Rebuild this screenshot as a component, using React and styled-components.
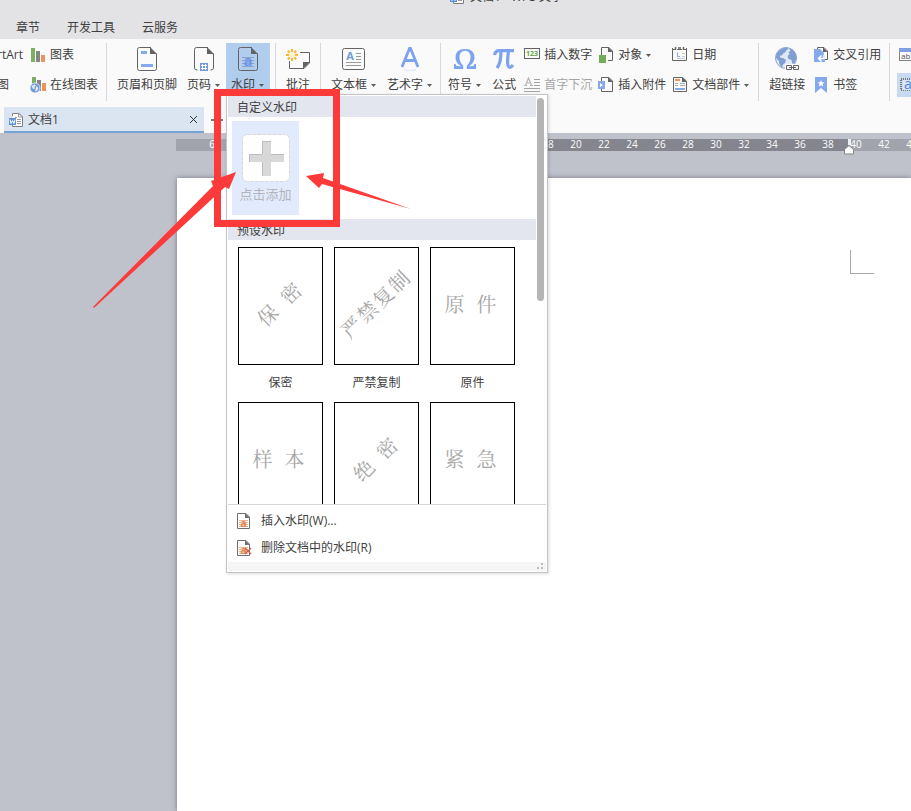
import React from 'react';
import styled, { createGlobalStyle, css } from 'styled-components';

const GREY = '#636363';
const BLUE = '#84a9ec';

const menus = ['章节', '开发工具', '云服务'];

const presets = [
  { name: '保密', rotated: true },
  { name: '严禁复制', rotated: true },
  { name: '原件' },
  { name: '样本' },
  { name: '绝密', rotated: true },
  { name: '紧急' }
];

const even = (from, to) => {
  const list = [];
  for (let i = from; i <= to; i += 2) list.push(i);
  return list;
};

/* big icons, 24 x 24 */

const HeaderFooterIcon = () => (
  <svg width="24" height="24" viewBox="0 0 24 24" fill="none">
    <path d="M16 .5H4.500Q2.500 .5 2.500 2.500V21.500Q2.500 23.500 4.500 23.500H19.500Q21.500 23.500 21.500 21.500V6.500" stroke={GREY} />
    <path d="M15 0v7h7z" fill={GREY} />
    <path d="M6 4h6v3H6zM6 17h12v3H6z" fill={BLUE} />
  </svg>
);

const PageNumberIcon = () => (
  <svg width="24" height="24" viewBox="0 0 24 24" fill="none">
    <path d="M16 .5H4.500Q2.500 .5 2.500 2.500V21Q2.500 23 5.500 23M21.500 6.500V21Q21.500 23 18.500 23" stroke={GREY} />
    <path d="M15 0v7h7z" fill={GREY} />
    <path d="M8 16h8v8H8z" fill="#7398de" />
    <path d="M10.500 17v6M13.500 17v6M9 18.500h6M9 21.500h6" stroke="#fff" />
  </svg>
);

const WatermarkIcon = () => (
  <svg width="24" height="24" viewBox="0 0 24 24" fill="none">
    <path d="M16 .5H4.500Q2.500 .5 2.500 2.500V21.500Q2.500 23.500 4.500 23.500H19.500Q21.500 23.500 21.500 21.500V6.500" stroke={GREY} />
    <path d="M15 0v7h7z" fill={GREY} />
    <path d="M6 10.500h12M6 13.500h12M6 16.500h12M6 19.500h12" stroke="#8ba0c4" />
    <text x="12" y="19" fill="#6b97ec" fontSize="15" fontWeight="700" textAnchor="middle">a</text>
  </svg>
);

const CommentIcon = () => (
  <svg width="24" height="24" viewBox="0 0 24 24" fill="none">
    <path d="M14 5.500h9.500V16L18 21.500H3.500V14" stroke={GREY} />
    <path d="M24 15h-7v7z" fill={GREY} />
    <circle cx="6" cy="8" r="2.500" fill="#fdf0c4" />
    <path d="M6 2v3M6 11v3M0 8h3M9 8h3M1.800 3.800l2 2M8.200 10.200l2 2M10.200 3.800l-2 2M3.800 10.200l-2 2" stroke="#f7b72c" strokeWidth="2" />
  </svg>
);

const TextBoxIcon = () => (
  <svg width="24" height="24" viewBox="0 0 24 24" fill="none">
    <rect x=".5" y="1.500" width="22" height="21" rx="2" stroke={GREY} />
    <text x="8" y="13" fill="#7398de" fontSize="11" fontWeight="700" textAnchor="middle">A</text>
    <path d="M14 6.500h5M14 9.500h5M14 12.500h5M4 15.500h15M4 18.500h15" stroke="#9b9b9b" />
  </svg>
);

const WordArtIcon = () => (
  <svg width="24" height="24" viewBox="0 0 24 24" fill="none">
    <path d="M4 20L11.500 1.500h1L20 20M7.200 13.500h9.600" stroke="#7ba3ee" strokeWidth="2.800" />
    <path d="M6 22.500q6 2 12 0" stroke="#e2eafb" strokeWidth="1.500" />
  </svg>
);

const OmegaIcon = () => (
  <svg width="24" height="24" viewBox="0 0 24 24">
    <path d="M1 22v-5h1.500q.4 2.300 2.600 2.300H8Q2.500 15.800 2.500 10.500 2.500 2 12 2t9.500 8.500Q21.500 15.800 16 19.300h2.900q2.200 0 2.600-2.300H23v5h-9.200v-3.200Q17.500 15 17.500 10.500 17.500 3.700 12 3.700T6.500 10.500Q6.500 15 10.200 18.800V22z" fill="#7ba3ee" />
  </svg>
);

const PiIcon = () => (
  <svg width="24" height="24" viewBox="0 0 24 24" fill="none" stroke="#7ba3ee">
    <path d="M2.500 8Q3.500 3.700 7 3.700H22" strokeWidth="3.200" />
    <path d="M9 4q0 12-4 17M16.500 4q-1.500 11-.5 14.500 1.500 4 5-.5" strokeWidth="3.200" />
  </svg>
);

const HyperlinkIcon = () => (
  <svg width="24" height="24" viewBox="0 0 24 24" fill="none">
    <circle cx="11" cy="11" r="10.500" fill="#dfe9f6" stroke="#86a5d8" />
    <path d="M5 3q3-2.500 7-2.500l1 2-2 1-1 2-2 1-1 2-2 0 0 2 3 .5 3 2-1 3-2 1.500-1 3Q4 18 4 14L1 11Q.5 6 5 3z" fill="#7f9fd2" />
    <path d="M14 1l4 2q3.500 3.500 3.500 8l-2 5-2 1-1-4-3-1-1-3 2-2-1-2 2-1z" fill="#7f9fd2" />
    <path d="M10 17h14v7H10z" fill="#fafafa" />
    <path d="M11.500 18.500h5v4h-5zM18.500 18.500h5v4h-5zM14 20.500h7" stroke={GREY} />
  </svg>
);

/* small icons, 16 x 16 */

const ChartIcon = () => (
  <svg width="16" height="16" viewBox="0 0 16 16">
    <path d="M1 1h4v14H1z" fill="#7bb060" />
    <path d="M6 4h4v11H6z" fill="#858585" />
    <path d="M11 8h4v7h-4z" fill="#ec935d" />
  </svg>
);

const OnlineChartIcon = () => (
  <svg width="16" height="16" viewBox="0 0 16 16">
    <path d="M2 0h4v8H2z" fill="#7bb060" />
    <path d="M7 3h4v11H7z" fill="#858585" />
    <path d="M12 6h4v8h-4z" fill="#ec935d" />
    <circle cx="5" cy="11" r="5" fill="#6f9ad6" stroke="#fafafa" strokeWidth=".7" />
    <path d="M1.500 9l3-1.500 1.500 1-1.500 1.500.5 1.500L3 12zM6.500 9l2 2-1.500 3-2 .5.5-2.500z" fill="#dce9f8" />
  </svg>
);

const NumberIcon = () => (
  <svg width="16" height="16" viewBox="0 0 16 16" fill="none">
    <rect x=".5" y="1.500" width="15" height="10" stroke={GREY} />
    <text x="8" y="9" fill="#62a744" fontSize="7" fontWeight="700" textAnchor="middle">123</text>
  </svg>
);

const DropCapIcon = () => (
  <svg width="16" height="16" viewBox="0 0 16 16" fill="none">
    <path d="M0 8.500h3M6 8.500h3M1.500 8.500l3-7.500 3 7.500M2.700 6h3.800" stroke="#b5b5b5" strokeWidth="1.200" />
    <path d="M10 2.500h6M10 5.500h6M10 8.500h6M0 11.500h16M0 14.500h16" stroke="#a2a2a2" />
  </svg>
);

const ObjectIcon = () => (
  <svg width="16" height="16" viewBox="0 0 16 16" fill="none">
    <path d="M3.500 8V.500H11L14.500 4v9.500H10" stroke={GREY} />
    <path d="M10 0v5h5z" fill={GREY} />
    <path d="M1 8h7v8H1z" fill="#71ad57" />
  </svg>
);

const AttachmentIcon = () => (
  <svg width="16" height="16" viewBox="0 0 16 16" fill="none">
    <path d="M3.500 4V.500H11L14.500 4v10.500h-11V12" stroke={GREY} />
    <path d="M10 0v5h5z" fill={GREY} />
    <path d="M0 4h7v8H0z" fill={BLUE} />
    <path d="M2 6l3 2-3 2z" fill="#fff" />
  </svg>
);

const DateIcon = () => (
  <svg width="16" height="16" viewBox="0 0 16 16" fill="none">
    <path d="M.500 1v12.500h14V1M0 2.500h3M5 2.500h5M12 2.500h3" stroke={GREY} />
    <path d="M3.500 0v3M11.500 0v3M6 1h3" stroke={GREY} strokeWidth="1.500" />
    <path d="M5.500 5.500v4H8" stroke={BLUE} />
    <path d="M10 6.500h3M10 9.500h3M5 11.500h8" stroke="#c7c7c7" />
  </svg>
);

const DocPartIcon = () => (
  <svg width="16" height="16" viewBox="0 0 16 16" fill="none">
    <path d="M10.500.500h-9v14h13V4z" stroke={GREY} />
    <path d="M10 0v5h5z" fill={GREY} />
    <path d="M3 3h5" stroke="#ec935d" strokeWidth="2" />
    <path d="M3 6.500h3M8 6.500h5M3 8.500h3M8 8.500h5" stroke="#aaa" />
    <path d="M3 12h10" stroke={BLUE} strokeWidth="2" />
  </svg>
);

const CrossRefIcon = () => (
  <svg width="16" height="16" viewBox="0 0 16 16" fill="none">
    <path d="M4.500 2V.500H11L14.500 4v8.500H12" stroke={GREY} />
    <path d="M10 0v5h4.500z" fill={GREY} />
    <path d="M1 2h6l4 4v2h1v7H1z" fill={BLUE} />
    <path d="M11 7.500v4H6M8.500 8.500L5.500 11.500l3 3" stroke="#fff" strokeWidth="1.500" />
  </svg>
);

const BookmarkIcon = () => (
  <svg width="16" height="16" viewBox="0 0 16 16">
    <path d="M2 0h12v16l-6-5-6 5z" fill={BLUE} />
    <path d="M8 3l1 2.300 2.500.200-2 1.600.700 2.500L8 8.200 5.800 9.600l.700-2.500-2-1.600L7 5.300z" fill="#fff" />
  </svg>
);

const FieldIcon = () => (
  <svg width="20" height="16" viewBox="0 0 20 16" fill="none">
    <rect x="2.500" y="1.500" width="18" height="12" stroke="#868686" />
    <path d="M2 1h18v4H2z" fill="#7f9fe0" />
    <text x="4" y="12" fill="#555" fontSize="8">ab</text>
  </svg>
);

const ShadingIcon = () => (
  <svg width="20" height="24" viewBox="0 0 20 24" fill="none">
    <rect x="4" y="6" width="18" height="11" stroke="#777" strokeWidth="2" strokeDasharray="1 1" />
    <path d="M6 7h14v10H6z" fill="#dce8f8" />
    <text x="7" y="16" fill="#5383d3" fontSize="14">a</text>
  </svg>
);

const DocIcon = () => (
  <svg width="16" height="16" viewBox="0 0 16 16" fill="none">
    <path d="M4.500 4V1.500H11l3.500 3.500v9.500h-10V12" fill="#fff" stroke="#808080" />
    <path d="M10.500 1v4H15zM9 7.500h4M9 9.500h4M9 11.500h4M7 5.500h2" stroke="#999" />
    <path d="M1 6h7v7H1z" fill="#5b91d6" />
    <path d="M2 7.500l1 4 1.500-3 1.500 3 1-4" stroke="#fff" />
  </svg>
);

const InsertWatermarkIcon = ({ remove }) => (
  <svg width="16" height="16" viewBox="0 0 16 16" fill="none">
    <path d="M10 .500H1.500v15h12V4z" stroke="#707070" />
    <path d="M9 0v5h5z" fill="#707070" />
    <path d="M3 7.500h9M3 9.500h9M3 11.500h9M3 13.500h9" stroke="#ecb48f" />
    <text x="7.500" y="13.500" fill="#d98a55" fontSize="11" fontWeight="700" textAnchor="middle">a</text>
    {remove && <path d="M9 8l6 6M15 8l-6 6" stroke="#dd5a4b" strokeWidth="1.200" />}
  </svg>
);

const AddIcon = () => (
  <svg width="48" height="48" viewBox="0 0 48 48">
    <rect x=".5" y=".5" width="47" height="47" rx="5" fill="#fff" stroke="#d9d9dc" strokeDasharray="4 1" />
    <path d="M20 7h9v13h13v8H29v14h-9V28H7v-8h13z" fill="#d8d8d8" />
    <path d="M20.500 20V7.500H29M20.500 28v14M7.500 28v-7.500h13M29 20.500h13" stroke="#bcbcbc" fill="none" />
  </svg>
);

const Caret = () => (
  <svg width="6" height="3" viewBox="0 0 6 3">
    <path d="M0 0h5L2.500 3z" fill="#5c5c5c" />
  </svg>
);

const Big = ({ icon, label, caret, active }) => (
  <BigButton type="button" $active={active}>
    {icon}
    <BigLabel>
      {label}
      {caret && <Caret />}
    </BigLabel>
  </BigButton>
);

const Small = ({ icon, label, caret, disabled, active }) => (
  <SmallButton type="button" disabled={disabled} $active={active}>
    {icon}
    {label && <span>{label}</span>}
    {caret && <Caret />}
  </SmallButton>
);

const WatermarkMenu = () => (
  <Popup>
    <Gallery>
      <GalleryBody>
        <SectionTitle>自定义水印</SectionTitle>
        <CustomArea>
          <AddTile type="button">
            <AddIcon />
            点击添加
          </AddTile>
        </CustomArea>
        <SectionTitle>预设水印</SectionTitle>
        <PresetGrid>
          {presets.map(({ name, rotated }) => (
            <Preset type="button" key={name}>
              <Thumb>
                <Mark $rotated={rotated} $spaced={name.length === 2}>
                  {name.split('').map(char => (
                    <span key={char}>{char}</span>
                  ))}
                </Mark>
              </Thumb>
              <Caption>{name}</Caption>
            </Preset>
          ))}
        </PresetGrid>
      </GalleryBody>
      <ScrollTrack>
        <ScrollThumb />
      </ScrollTrack>
    </Gallery>
    <Commands>
      <Command type="button">
        <InsertWatermarkIcon />
        插入水印(W)...
      </Command>
      <Command type="button">
        <InsertWatermarkIcon remove />
        删除文档中的水印(R)
      </Command>
    </Commands>
    <Grip>
      <svg width="8" height="8" viewBox="0 0 8 8">
        <path d="M5 1h2v2H5zM1 5h2v2H1zM5 5h2v2H5z" fill="#bdbdbd" />
      </svg>
    </Grip>
  </Popup>
);

const Annotation = () => (
  <AnnotationLayer width="420" height="320" viewBox="0 0 420 320">
    <rect x="217.500" y="92.500" width="119" height="131" fill="none" stroke="#fc3a3a" strokeWidth="7" />
    <path d="M93 307L213 186L211 181L236 172L229 189L225 187L94 308z" fill="#fc3a3a" />
    <path d="M306 176L324 173L323 178L411 209L322 184L319 188z" fill="#fc3a3a" />
  </AnnotationLayer>
);

const App = () => (
  <Window>
    <GlobalStyle />
    <TitleBar>
      <DocIcon />
      文档1 - WPS 文字
    </TitleBar>
    <MenuBar>
      {menus.map(menu => (
        <MenuItem type="button" key={menu}>{menu}</MenuItem>
      ))}
    </MenuBar>

    <Ribbon>
      <Group>
        <ClippedColumn>
          <Small label="rtArt" />
          <Small label="图" />
        </ClippedColumn>
        <Columns $left={6}>
          <Column>
            <Small icon={<ChartIcon />} label="图表" />
            <Small icon={<OnlineChartIcon />} label="在线图表" />
          </Column>
        </Columns>
      </Group>
      <Group $pad="0 5px">
        <Big icon={<HeaderFooterIcon />} label="页眉和页脚" />
        <Big icon={<PageNumberIcon />} label="页码" caret />
        <MenuAnchor>
          <Big icon={<WatermarkIcon />} label="水印" caret active />
          <WatermarkMenu />
        </MenuAnchor>
      </Group>
      <Group $pad="0 5px">
        <Big icon={<CommentIcon />} label="批注" />
      </Group>
      <Group $pad="0 2px 0 5px">
        <Big icon={<TextBoxIcon />} label="文本框" caret />
        <Big icon={<WordArtIcon />} label="艺术字" caret />
      </Group>
      <Group $pad="0 0 0 2px">
        <Big icon={<OmegaIcon />} label="符号" caret />
        <Big icon={<PiIcon />} label="公式" />
        <Columns $left={3}>
          <Column>
            <Small icon={<NumberIcon />} label="插入数字" />
            <Small icon={<DropCapIcon />} label="首字下沉" disabled />
          </Column>
          <Column>
            <Small icon={<ObjectIcon />} label="对象" caret />
            <Small icon={<AttachmentIcon />} label="插入附件" />
          </Column>
          <Column>
            <Small icon={<DateIcon />} label="日期" />
            <Small icon={<DocPartIcon />} label="文档部件" caret />
          </Column>
        </Columns>
      </Group>
      <Group $pad="0 0 0 5px">
        <Big icon={<HyperlinkIcon />} label="超链接" />
        <Columns $left={3}>
          <Column>
            <Small icon={<CrossRefIcon />} label="交叉引用" />
            <Small icon={<BookmarkIcon />} label="书签" />
          </Column>
        </Columns>
      </Group>
      <Group $pad="0 0 0 7px">
        <Column>
          <Small icon={<FieldIcon />} />
          <Small icon={<ShadingIcon />} active />
        </Column>
      </Group>
    </Ribbon>

    <TabStrip>
      <DocTab>
        <DocIcon />
        <TabName>文档1</TabName>
        <IconButton type="button" aria-label="关闭">
          <svg width="9" height="9" viewBox="0 0 9 9">
            <path d="M1 1l7 7M8 1l-7 7" stroke="#333" />
          </svg>
        </IconButton>
      </DocTab>
      <IconButton type="button" aria-label="新建">
        <svg width="12" height="12" viewBox="0 0 12 12">
          <path d="M0 6h12M6 0v12" stroke="#777" strokeWidth="2" />
        </svg>
      </IconButton>
    </TabStrip>

    <Workspace>
      <Ruler>
        <RulerPart $pad="0 14px 0 22px">
          {even(2, 6).reverse().map(n => <Tick key={n}>{n}</Tick>)}
        </RulerPart>
        <RulerPart $dark $pad="0 7px 0 14px">
          {even(2, 38).map(n => <Tick key={n}>{n}</Tick>)}
          <Indent width="10" height="16" viewBox="0 0 10 16">
            <path d="M4 0h3v6H4z" fill="#f1f1f3" />
            <path d="M5 6.500l4.500 4v4.500H.5v-4.500z" fill="#fff" stroke="#858585" />
          </Indent>
        </RulerPart>
        <RulerPart $grow>
          <FirstTick>40</FirstTick>
          {even(42, 60).map(n => <Tick key={n}>{n}</Tick>)}
        </RulerPart>
      </Ruler>
      <Paper>
        <MarginCorner />
      </Paper>
    </Workspace>
    <Annotation />
  </Window>
);

export default App;

const GlobalStyle = createGlobalStyle`
  * {
    box-sizing: border-box;
  }
  body {
    margin: 0;
    font-family: "Open Sans", "Noto Sans CJK SC", sans-serif;
    font-size: 12px;
    line-height: 18px;
    color: #404040;
  }
  button {
    margin: 0;
    padding: 0;
    border: 0;
    background: none;
    font: inherit;
    color: inherit;
    white-space: nowrap;
  }
  svg {
    display: block;
    flex-shrink: 0;
  }
`;

const Window = styled.div`
  position: relative;
  display: flex;
  flex-direction: column;
  min-height: 100vh;
  overflow: hidden;
  background: #fafafa;
`;

const TitleBar = styled.div`
  display: flex;
  align-items: flex-end;
  gap: 5px;
  height: 5px;
  padding-left: 449px;
  overflow: hidden;
  background: #e3e3e5;
  line-height: 16px;
  white-space: nowrap;
`;

const MenuBar = styled.div`
  display: flex;
  gap: 27px;
  padding: 12px 16px 0;
  background: #e3e3e5;
`;

const MenuItem = styled.button`
  line-height: 22px;
`;

const Ribbon = styled.div`
  display: flex;
  padding: 4px 0 6px;
`;

const Group = styled.div`
  display: flex;
  flex-shrink: 0;
  height: 58px;
  padding: ${props => props.$pad || 0};
  border-right: 1px solid #d8d8da;
`;

const BigButton = styled.button`
  display: flex;
  flex-direction: column;
  align-items: center;
  gap: 5px;
  height: 58px;
  padding: 4px 5px 0;
  background: ${props => (props.$active ? '#b1cdee' : 'none')};
`;

const BigLabel = styled.span`
  display: flex;
  align-items: center;
  gap: 4px;
`;

const Columns = styled.div`
  display: flex;
  gap: 6px;
  padding: 0 8px 0 ${props => props.$left}px;
`;

const Column = styled.div`
  display: flex;
  flex-direction: column;
  align-items: flex-start;
  gap: 6px;
`;

const ClippedColumn = styled(Column)`
  width: 24px;
  margin-left: -3px;
  margin-right: 3px;
`;

const SmallButton = styled.button`
  display: flex;
  align-items: center;
  gap: 4px;
  height: 24px;
  ${props => props.$active && css`
    background: #c8daf1;
  `}
  &:disabled {
    color: #a5a5a5;
  }
`;

const MenuAnchor = styled.div`
  position: relative;
`;

const Popup = styled.div`
  position: absolute;
  z-index: 2;
  top: 51px;
  left: 0;
  width: 322px;
  padding: 1px;
  border: 1px solid #c4c4c6;
  background: #fff;
  box-shadow: 1px 1px 3px rgba(0, 0, 0, 0.15);
`;

const Gallery = styled.div`
  display: flex;
  height: 409px;
  overflow: hidden;
  border-bottom: 1px solid #d6d6d6;
`;

const GalleryBody = styled.div`
  flex: 1;
`;

const SectionTitle = styled.div`
  height: 21px;
  padding: 3px 0 0 9px;
  background: #e3e6ee;
`;

const CustomArea = styled.div`
  padding: 4px;
`;

const AddTile = styled.button`
  display: flex;
  flex-direction: column;
  align-items: center;
  gap: 3px;
  width: 67px;
  height: 94px;
  padding-top: 13px;
  background: #e2ebfd;
  color: #b4b4b8;
  font-size: 13px;
`;

const PresetGrid = styled.div`
  display: grid;
  grid-template-columns: repeat(3, 85px);
  gap: 1px 11px;
  padding: 7px 10px;
`;

const Preset = styled.button`
  display: block;
`;

const Thumb = styled.span`
  display: flex;
  align-items: center;
  justify-content: center;
  height: 118px;
  padding: 0 4px 4px 0;
  border: 1px solid #000;
  background: #fff;
`;

const Mark = styled.span`
  display: flex;
  gap: ${props => (props.$spaced ? 12 : 2)}px;
  color: #a6a6a6;
  font-family: "Noto Serif CJK SC", "Noto Sans CJK SC", serif;
  font-size: 20px;
  line-height: 24px;
  transform: ${props => (props.$rotated ? 'rotate(-44deg)' : 'none')};
`;

const Caption = styled.span`
  display: block;
  line-height: 36px;
`;

const ScrollTrack = styled.div`
  width: 10px;
  padding: 2px 1px;
`;

const ScrollThumb = styled.div`
  width: 7px;
  height: 203px;
  border-radius: 4px;
  background: #b5b5b5;
`;

const Commands = styled.div`
  padding: 2px 0 1px;
`;

const Command = styled.button`
  display: flex;
  align-items: center;
  gap: 9px;
  width: 100%;
  height: 27px;
  padding-left: 8px;
`;

const Grip = styled.div`
  display: flex;
  justify-content: flex-end;
  height: 9px;
  padding-right: 2px;
  background: #f5f5f5;
`;

const TabStrip = styled.div`
  display: flex;
  align-items: center;
  gap: 7px;
  height: 26px;
  padding-left: 4px;
`;

const DocTab = styled.div`
  display: flex;
  align-items: center;
  gap: 4px;
  width: 200px;
  height: 26px;
  padding: 1px 6px 0 4px;
  border-bottom: 2px solid #78a2d6;
  background: #dbe5f1;
`;

const TabName = styled.span`
  flex: 1;
`;

const IconButton = styled.button`
  display: flex;
`;

const Workspace = styled.div`
  display: flex;
  flex: 1;
  flex-direction: column;
  padding: 6px 0 0 176px;
  background: #bfc1cb;
`;

const Ruler = styled.div`
  display: flex;
  height: 12px;
  margin-bottom: 27px;
  color: #fff;
  font-size: 10px;
  line-height: 11px;
`;

const RulerPart = styled.div`
  position: relative;
  display: flex;
  flex: ${props => (props.$grow ? '1 0 0' : 'none')};
  min-width: 0;
  padding: ${props => props.$pad || 0};
  background: ${props => (props.$dark ? '#85858f' : '#a1a3ad')};
`;

const Tick = styled.span`
  flex-shrink: 0;
  width: 28px;
  text-align: center;
`;

const FirstTick = styled(Tick)`
  width: 21px;
  padding-right: 7px;
`;

const Indent = styled.svg`
  position: absolute;
  z-index: 1;
  top: 0;
  right: -5px;
`;

const Paper = styled.div`
  position: relative;
  flex: 1;
  margin-left: 1px;
  background: #fff;
  box-shadow: 0 0 5px rgba(70, 72, 90, 0.6);
`;

const MarginCorner = styled.div`
  position: absolute;
  top: 72px;
  left: 673px;
  width: 24px;
  height: 24px;
  border: solid #a8a8a8;
  border-width: 0 0 1px 1px;
`;

const AnnotationLayer = styled.svg`
  position: absolute;
  z-index: 3;
  top: 0;
  left: 0;
  pointer-events: none;
`;
